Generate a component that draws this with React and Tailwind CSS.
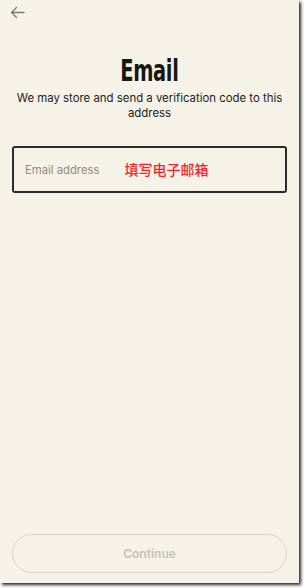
import React from "react";

export default function App() {
  return (
    <div className="w-[304px] h-[588px] bg-white overflow-hidden">
      <div
        className="w-[299px] h-[583px] bg-[#f5f3e7] flex flex-col relative shadow-[2px_2px_3px_rgba(0,0,0,0.85)]"
        style={{ fontFamily: "Inter, 'Noto Sans', sans-serif" }}
      >
        <div className="h-[26px] pl-[10px] pt-[6px]">
          <svg width="15" height="13" viewBox="0 0 15 13" fill="none" stroke="#777" strokeWidth="1.3" strokeLinecap="round" strokeLinejoin="round">
            <path d="M14 6.5H1.5M6.5 1.5L1.5 6.5L6.5 11.5" />
          </svg>
        </div>
        <div className="mt-[30px] flex flex-col items-center">
          <div
            className="text-[30px] leading-[30px] font-bold text-[#161616] tracking-[-0.5px]"
            style={{ fontFamily: "'DejaVu Sans Condensed', 'Liberation Sans Narrow', sans-serif", transform: "scaleX(0.72)" }}
          >
            Email
          </div>
          <div className="mt-[5px] text-[11.4px] leading-[15px] text-[#222] text-center px-[12px]">
            We may store and send a verification code to this address
          </div>
        </div>
        <div className="mt-[25px] mx-[12px] h-[47px] border-2 border-[#2b2b2b] rounded-[3px] flex items-center pl-[11px]">
          <span className="text-[11.3px] text-[#8e8c86] mt-[1px]">Email address</span>
          <span
            className="ml-[25px] text-[14px] text-[#f0282d] font-medium"
            style={{ fontFamily: "'Noto Sans CJK SC', sans-serif" }}
          >
            填写电子邮箱
          </span>
        </div>
        <div className="flex-1" />
        <div className="mx-[12px] mb-[10px] h-[39px] rounded-full border border-[#d8d6cb] flex items-center justify-center">
          <span className="text-[12px] font-semibold text-[#c4c2b8]">Continue</span>
        </div>
      </div>
    </div>
  );
}
